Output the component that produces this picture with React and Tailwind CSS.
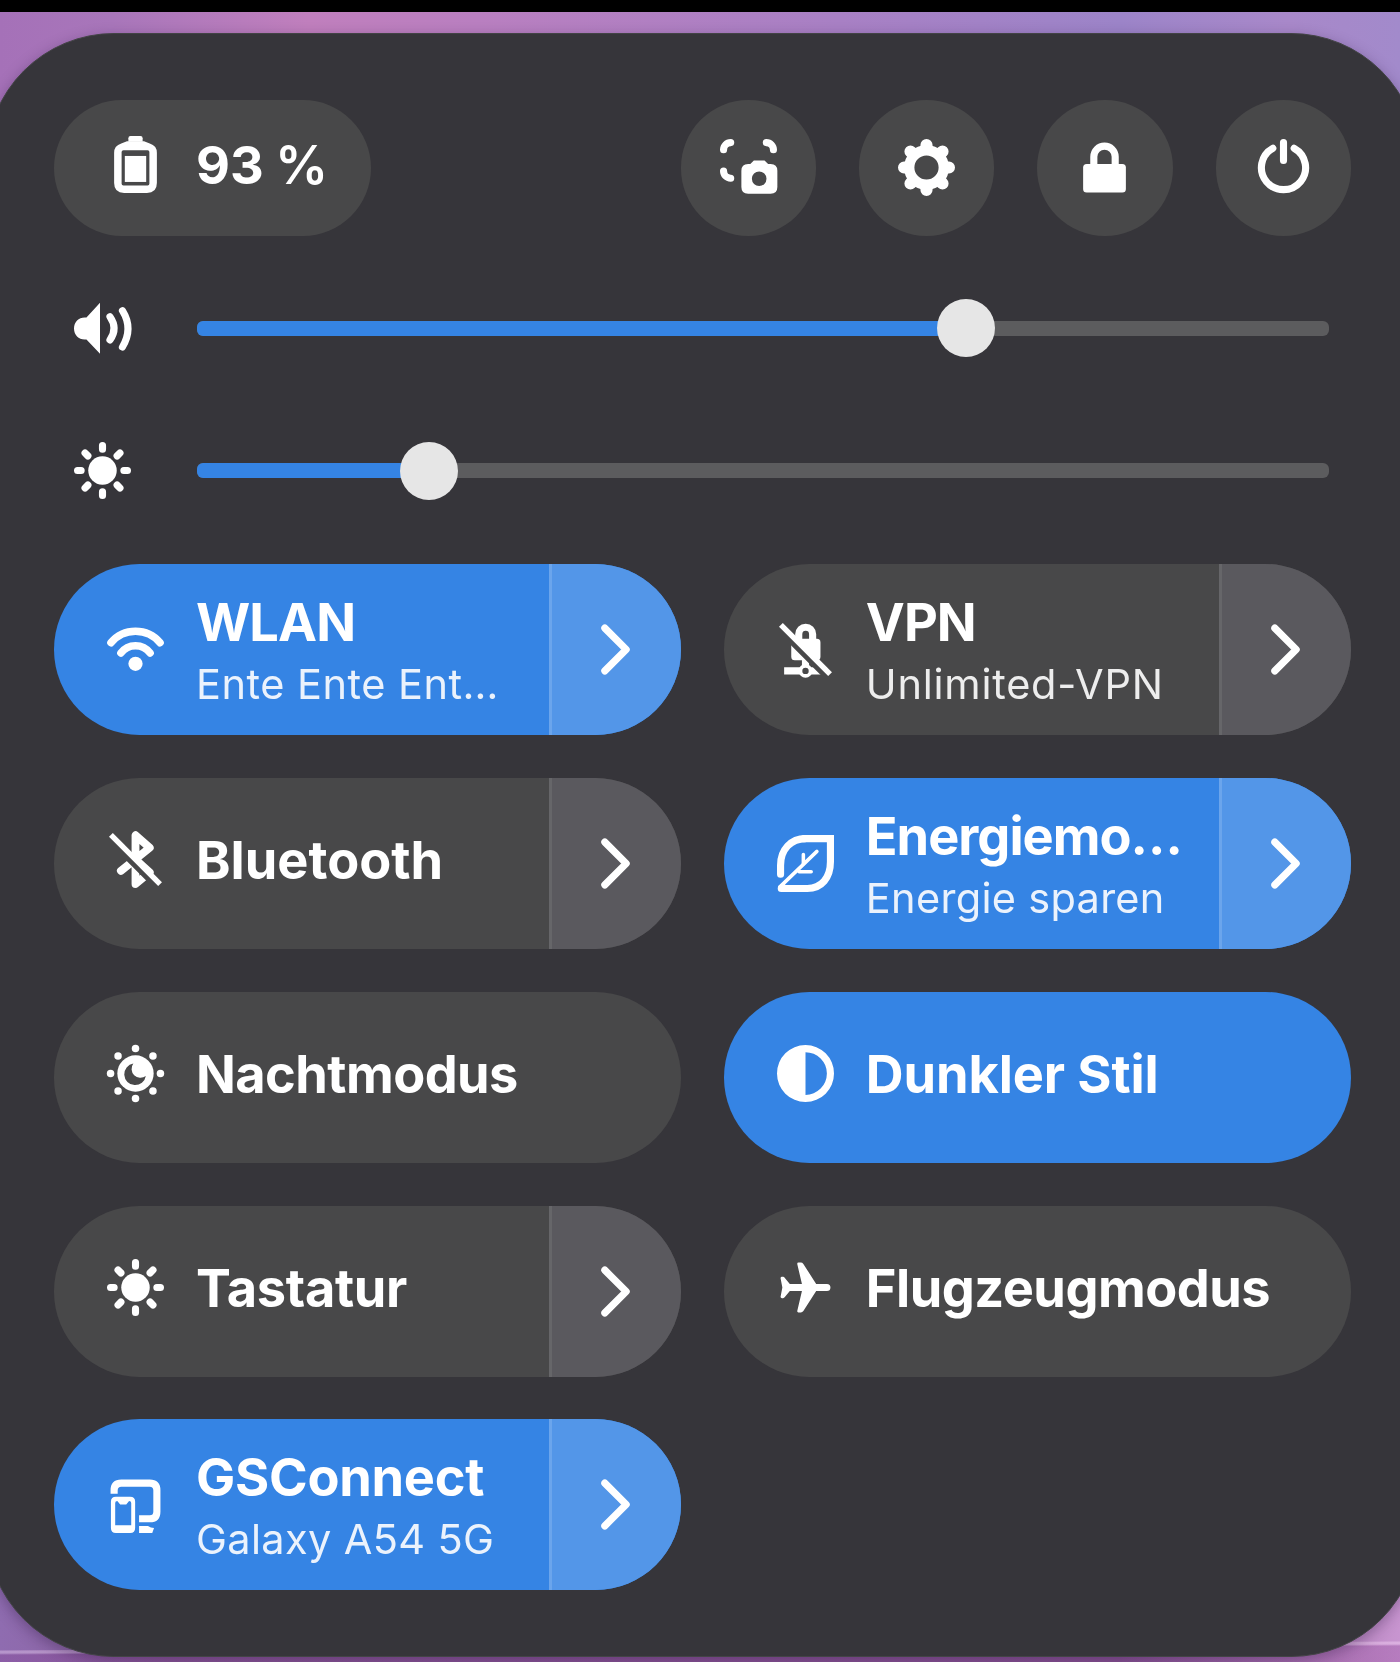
import React from "react";

function Icon({ children }) {
  return (
    <svg
      viewBox="0 0 16 16"
      className="h-[57px] w-[57px] shrink-0 overflow-visible"
      fill="currentColor"
      strokeLinecap="round"
      strokeLinejoin="round"
    >
      {children}
    </svg>
  );
}

const line = { fill: "none", stroke: "currentColor", strokeWidth: 2 };

const BatteryIcon = () => (
  <Icon>
    <path d="M6 1.6V.6Q6 0 6.6 0h2.800q.6 0 .6.6v1Z" />
    <path
      fillRule="evenodd"
      d="M5.6 1.5h4.8L12 2.1q2 .6 2 2.6v8.5q0 2.8-2.8 2.8H4.8Q2 16 2 13.2V4.7q0-2 2-2.6ZM4.6 4q-.5 0-.5.5v8.900q0 .5.5.5h6.800q.5 0 .5-.5V4.500q0-.5-.5-.5Z"
    />
    <path d="M5 5.6h6v7.300H5z" />
  </Icon>
);

const ScreenshotIcon = () => (
  <Icon>
    <path {...line} d="M1 3a2 2 0 0 1 2-2M13 1a2 2 0 0 1 2 2M1 9a2 2 0 0 0 2 2" />
    <path
      fillRule="evenodd"
      d="M9.500 6h3l1 1h.7q1.900 0 1.900 1.900v4.600q0 1.900-1.900 1.900H7.900Q6 15.400 6 13.500V8.900Q6 7 7.900 7h.6ZM11 9.100a2.050 2.050 0 1 0 0 4.100a2.050 2.050 0 0 0 0-4.100Z"
    />
  </Icon>
);

const GearIcon = () => (
  <Icon>
    <circle cx="8" cy="8" r="4.850" fill="none" stroke="currentColor" strokeWidth="2.900" />
    <path
      fill="none"
      stroke="currentColor"
      strokeWidth="3.400"
      d="M8 2.600V1.700M8 13.400v.9M2.600 8H1.700M13.400 8h.9M4.100 4.100l-.6-.6M11.900 4.100l.6-.6M4.100 11.900l-.6.6M11.900 11.900l.6.6"
    />
  </Icon>
);

const LockIcon = () => (
  <Icon>
    <path {...line} d="M5 8V5a3 3 0 0 1 6 0v3" />
    <rect x="2" y="7" width="12" height="8" rx="1" />
  </Icon>
);

const PowerIcon = () => (
  <Icon>
    <path {...line} d="M8 1v5M5 2.600a6.200 6.200 0 1 0 6 0" />
  </Icon>
);

const VolumeIcon = () => (
  <Icon>
    <path d="M0 8c0-1.800 1.300-3.100 3-3.100h.5L7.300.8v14.300L3.500 11.100H3C1.300 11.100 0 9.800 0 8Z" />
    <path {...line} d="M10.100 4.700q2.300 3.300 0 6.500M13.600 3q3.100 5 0 10.200" />
  </Icon>
);

const SunIcon = () => (
  <Icon>
    <circle cx="8" cy="8" r="4" />
    <path
      {...line}
      d="M8 1v1M8 14v1M1 8h1M14 8h1M3.100 3.100l.8.8M12.100 3.900l.8-.8M3.100 12.900l.8-.8M12.100 12.100l.8.8"
    />
  </Icon>
);

const WifiIcon = () => (
  <Icon>
    <path {...line} strokeWidth="2.100" d="M1.100 6.100a9 9 0 0 1 13.800 0M3.900 9a5.100 5.100 0 0 1 8.200 0" />
    <circle cx="8" cy="12" r="2" />
  </Icon>
);

/* Hides a thin band just below the diagonal strike of the "off" icons. */
const StrikeMask = ({ id }) => (
  <mask id={id} maskUnits="userSpaceOnUse" x="-2" y="-2" width="20" height="20">
    <rect x="-2" y="-2" width="20" height="20" fill="white" />
    <path d="M-1.500-1.500 17.500 17.500" stroke="black" strokeWidth="1.700" transform="translate(-.85 .85)" />
  </mask>
);

const Strike = () => <path d="M1.100 1.100 14.900 14.900" stroke="currentColor" strokeWidth="1.500" strokeLinecap="butt" />;

const VpnOffIcon = () => (
  <Icon>
    <StrikeMask id="vpn-gap" />
    <g mask="url(#vpn-gap)">
      <path {...line} d="M6.100 6V3.700a1.950 1.950 0 0 1 3.900 0V6" />
      <rect x="4" y="5" width="8.200" height="6" rx="1" />
      <path d="M7 10.500h2V13H7z" />
      <path d="M2 13h12v2H2z" />
      <circle cx="8" cy="14" r="1.900" />
      <circle cx="8" cy="14" r=".9" className="fill-[#484849]" />
    </g>
    <Strike />
  </Icon>
);

const BluetoothOffIcon = () => (
  <Icon>
    <StrikeMask id="bt-gap" />
    <g mask="url(#bt-gap)">
      <path {...line} strokeWidth="2.200" d="M3.900 11.200 12 4.700 8 1.200v13.700l4-3.300L8 8" />
    </g>
    <Strike />
  </Icon>
);

const LeafIcon = () => (
  <Icon>
    <path {...line} d="M1 11V8.500C1 4 4 1 8 1" />
    <path
      fill="none"
      stroke="currentColor"
      strokeWidth="2"
      strokeLinejoin="miter"
      d="M7.500 1H15v6.500C15 12 12.500 15 8.500 15H1.200"
    />
    <path d="M.3 14.300 2 13.500 3 15 .8 15.800Z" />
    <path fill="none" stroke="currentColor" strokeWidth="1" d="M.9 14.500 11.200 4.600" />
    <path fill="none" stroke="currentColor" strokeWidth="1" d="M7.400 5.500v2.600M6.200 10.300h3.400" />
  </Icon>
);

const NightIcon = () => (
  <Icon>
    <circle cx="8" cy="8" r="5.100" />
    <path className="fill-[#484849]" d="M7.400 5.200A3.050 3.050 0 1 0 10.900 8.700A2.500 2.500 0 0 1 7.400 5.200Z" />
    <circle cx="8" cy="1" r="1.050" />
    <circle cx="8" cy="15" r="1.050" />
    <circle cx="1" cy="8" r="1.050" />
    <circle cx="15" cy="8" r="1.050" />
    <circle cx="3.100" cy="3.100" r="1.050" />
    <circle cx="12.900" cy="3.100" r="1.050" />
    <circle cx="3.100" cy="12.900" r="1.050" />
    <circle cx="12.900" cy="12.900" r="1.050" />
  </Icon>
);

const ContrastIcon = () => (
  <Icon>
    <path fillRule="evenodd" d="M8 0a8 8 0 1 0 0 16A8 8 0 0 0 8 0Zm0 2a6 6 0 0 1 0 12Z" />
  </Icon>
);

const PlaneIcon = () => (
  <Icon>
    <path d="M1 5.400q0-.4.400-.4h.3q.3 0 .5.300L3.600 7H7L5.700 1.500Q5.600 1 6 1h.7q.4 0 .7.400L11 7h3q1 0 1 1t-1 1h-3l-3.600 5.600q-.3.400-.7.400H6q-.4 0-.3-.500L7 9H3.600l-1.400 1.700q-.2.300-.5.300h-.3Q1 11 1 10.600L1.500 8Z" />
  </Icon>
);

const DevicesIcon = () => (
  <Icon>
    <path {...line} strokeLinecap="butt" d="M2 5V4q0-2 2-2h8q2 0 2 2v6q0 2-2 2H9" />
    <path d="M9 14h2.500q.8.500 1.700.6L12.700 16H9Z" />
    <path
      fillRule="evenodd"
      d="M2.500 5.800h4q1.400 0 1.400 1.400v7.400Q7.900 16 6.500 16h-4Q1.100 16 1.100 14.600V7.200q0-1.400 1.400-1.400ZM2.900 7q-.6 0-.6.6v6.200h4.500V7.600q0-.6-.6-.6L5.400 8H3.700Z"
    />
  </Icon>
);

const ChevronIcon = () => (
  <Icon>
    <path {...line} d="m5 2 6 6-6 6" />
  </Icon>
);

function RoundButton({ label, children }) {
  return (
    <button
      aria-label={label}
      className="flex h-[136px] w-[135.500px] items-center justify-center rounded-full bg-[#484849]"
    >
      {children}
    </button>
  );
}

function Slider({ icon, value, label }) {
  return (
    <div className="flex h-[58px] items-center pl-5">
      {icon}
      <div
        role="slider"
        aria-label={label}
        aria-valuenow={Math.round(value)}
        className="relative ml-[66px] h-[15px] w-[1132px] rounded-[6px] bg-[#5c5c5e]"
      >
        <div className="h-full rounded-[6px] bg-[#3584e4]" style={{ width: `${value}%` }} />
        <div
          className="absolute top-1/2 h-[58px] w-[58px] -translate-x-1/2 -translate-y-1/2 rounded-full bg-[#e6e6e6]"
          style={{ left: `${value}%` }}
        />
      </div>
    </div>
  );
}

function Tile({ icon, title, titleClass, subtitle, subtitleClass, active, menu }) {
  return (
    <div
      className={`flex h-[171px] overflow-hidden rounded-full ${active ? "bg-[#3584e4]" : "bg-[#484849]"}`}
    >
      <button className={`flex min-w-0 flex-1 items-center pl-[53px] text-left ${subtitle ? "" : "pb-[7px]"}`}>
        {icon}
        <span className="mt-[2px] ml-[32px] flex flex-col gap-[5px] whitespace-nowrap">
          <span className={`text-[52.3px] leading-[63px] font-bold ${titleClass}`}>{title}</span>
          {subtitle && (
            <span className={`text-[41.500px] leading-[51px] opacity-90 ${subtitleClass}`}>{subtitle}</span>
          )}
        </span>
      </button>
      {menu && (
        <button
          aria-label={`${title} Menü`}
          className={`flex w-[132px] shrink-0 items-center border-l-[3px] pl-[35px] ${
            active ? "border-[#6ba5ec] bg-[#5396e8]" : "border-[#666669] bg-[#5a595e]"
          }`}
        >
          <ChevronIcon />
        </button>
      )}
    </div>
  );
}

const tiles = [
  {
    title: "WLAN",
    titleClass: "tracking-[-0.9px]",
    subtitle: "Ente Ente Ent…",
    subtitleClass: "tracking-[0.5px]",
    icon: <WifiIcon />,
    active: true,
    menu: true,
  },
  {
    title: "VPN",
    titleClass: "tracking-[-1px]",
    subtitle: "Unlimited-VPN",
    subtitleClass: "tracking-[0.75px]",
    icon: <VpnOffIcon />,
    menu: true,
  },
  { title: "Bluetooth", titleClass: "tracking-[0px]", icon: <BluetoothOffIcon />, menu: true },
  {
    title: "Energiemo…",
    titleClass: "tracking-[-1px]",
    subtitle: "Energie sparen",
    subtitleClass: "tracking-[0.3px]",
    icon: <LeafIcon />,
    active: true,
    menu: true,
  },
  { title: "Nachtmodus", titleClass: "tracking-[-0.55px]", icon: <NightIcon /> },
  { title: "Dunkler Stil", titleClass: "tracking-[-0.1px]", icon: <ContrastIcon />, active: true },
  { title: "Tastatur", titleClass: "tracking-[-0.3px]", icon: <SunIcon />, menu: true },
  { title: "Flugzeugmodus", titleClass: "tracking-[-0.5px]", icon: <PlaneIcon /> },
  {
    title: "GSConnect",
    titleClass: "tracking-[-0.25px]",
    subtitle: "Galaxy A54 5G",
    subtitleClass: "tracking-[0.35px]",
    icon: <DevicesIcon />,
    active: true,
    menu: true,
  },
];

export default function App() {
  return (
    <div className="flex h-[1662px] w-[1400px] flex-col overflow-hidden bg-[linear-gradient(179.63deg,transparent_1650px,rgba(255,225,255,0.35)_1651px,rgba(255,225,255,0.35)_1653px,rgba(130,50,140,0.25)_1655px),linear-gradient(90deg,#8f6cb0_0%,#8a5f9b_12%,#8a5c97_80%,#b886c0_95%,#c895d0_100%)] font-['Inter',sans-serif] text-white">
      <div className="h-[11.500px] shrink-0 bg-black" />
      <div className="flex-1 bg-[linear-gradient(90deg,#a571b8_0%,#a876ba_8%,#c07fbd_22%,#b97fc0_34%,#a880c4_60%,#9c84c8_80%,#a888c9_92%,#a28acb_100%)] bg-[length:100%_300px] bg-no-repeat pt-[21px]">
        <main className="-ml-[14px] flex h-[1624px] w-[1433px] flex-col rounded-[128px] border border-[#434446] bg-[#36353a] pt-[66px] pl-[67px] shadow-[0_4px_14px_rgba(40,20,60,0.35)]">
          <div className="flex h-[136px] w-[1297px] items-center justify-between">
            <button className="flex h-full w-[317px] items-center rounded-full bg-[#484849] pb-[6px] pl-[53px]">
              <BatteryIcon />
              <span className="mt-[2px] ml-[32px] text-[52.3px] leading-[63px] font-bold whitespace-nowrap">
                <span className="tracking-[-0.5px]">93</span>
                {"\u202f"}
                <span className="ml-[3px] text-[53px] font-semibold">%</span>
              </span>
            </button>
            <div className="flex gap-[42.800px]">
              <RoundButton label="Bildschirmfoto">
                <ScreenshotIcon />
              </RoundButton>
              <RoundButton label="Einstellungen">
                <GearIcon />
              </RoundButton>
              <RoundButton label="Sperren">
                <LockIcon />
              </RoundButton>
              <RoundButton label="Ausschalten">
                <PowerIcon />
              </RoundButton>
            </div>
          </div>
          <div className="mt-[63.500px] flex flex-col gap-[84.500px]">
            <Slider label="Lautstärke" icon={<VolumeIcon />} value={67.950} />
            <Slider label="Helligkeit" icon={<SunIcon />} value={20.500} />
          </div>
          <div className="mt-[64.500px] grid w-[1297px] grid-cols-2 gap-x-[42.700px] gap-y-[42.850px]">
            {tiles.map((tile) => (
              <Tile key={tile.title} {...tile} />
            ))}
          </div>
        </main>
      </div>
    </div>
  );
}
